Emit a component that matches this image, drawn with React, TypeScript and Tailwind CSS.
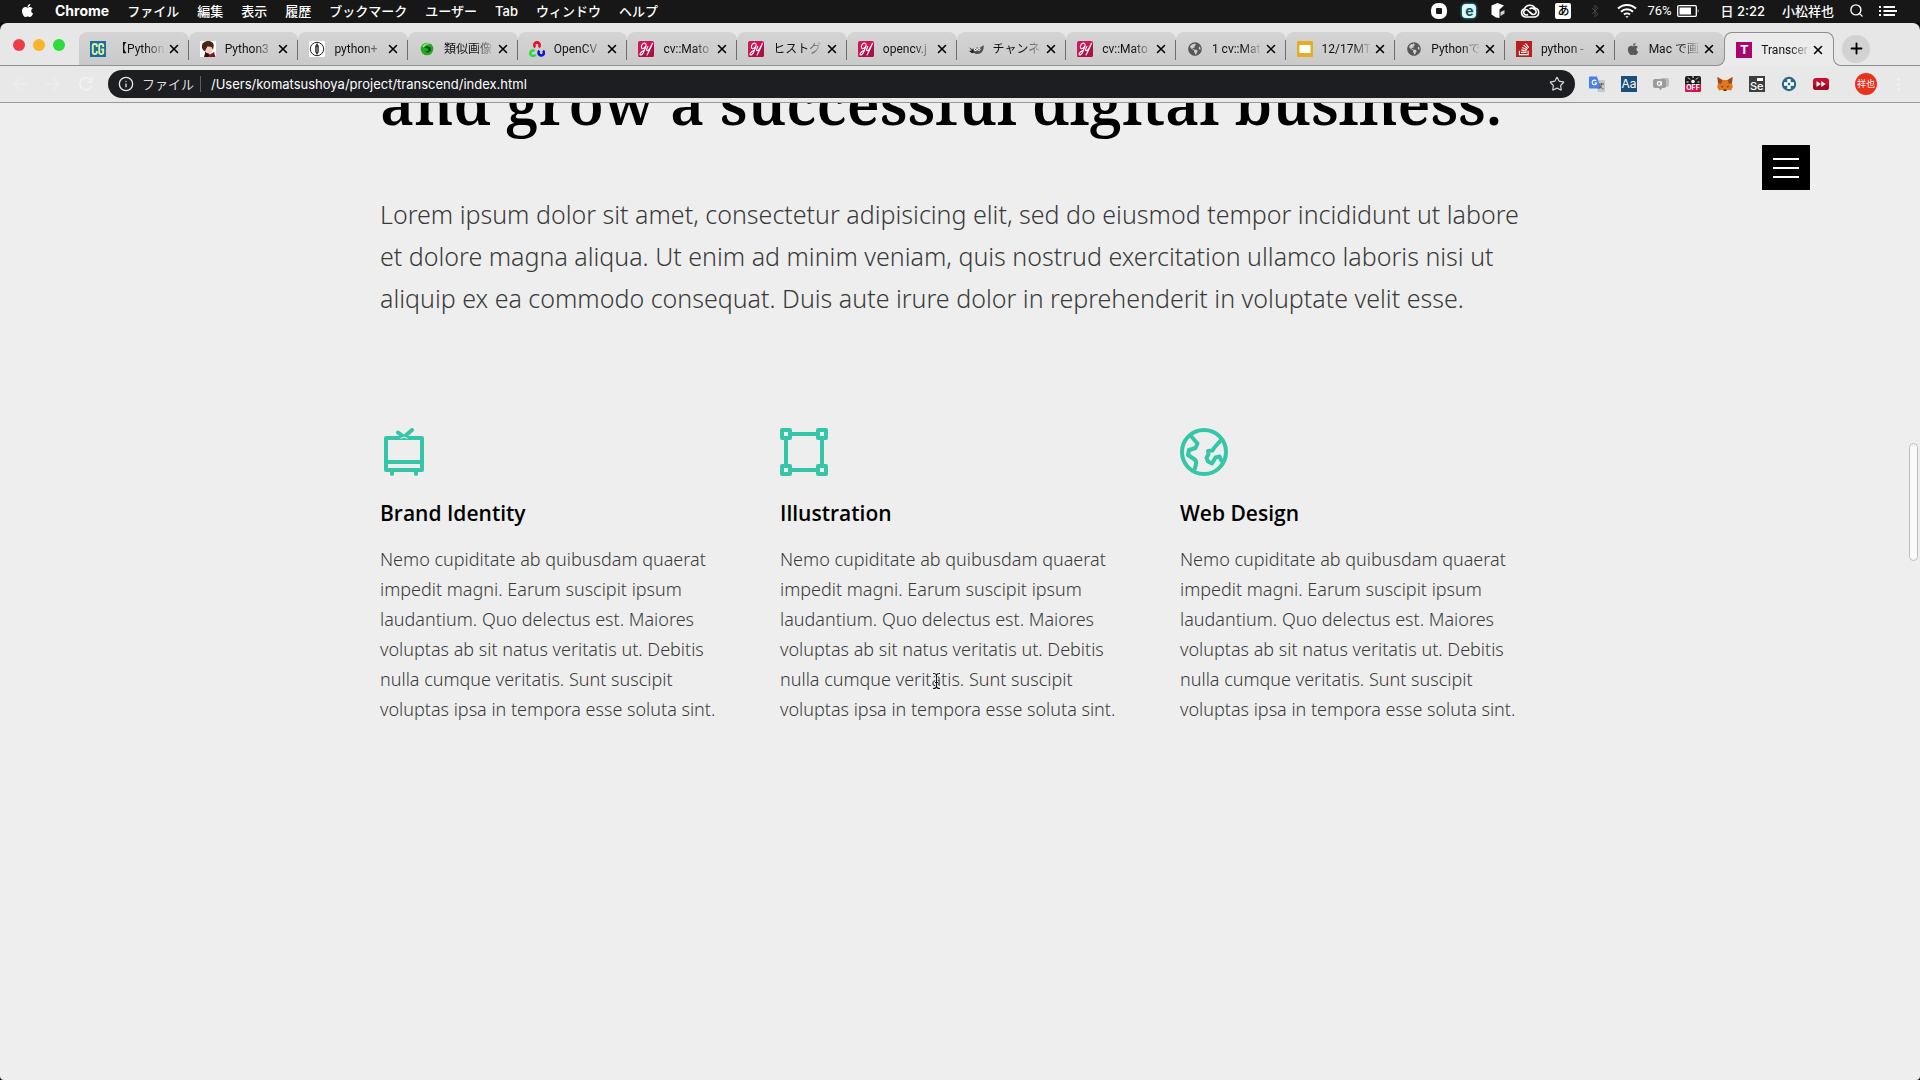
import type { ReactNode } from "react";
import { FaApple, FaGlobeAmericas, FaStackOverflow } from "react-icons/fa";
import { Bluetooth, Info, Plus, Search, Star, X } from "lucide-react";

/* ---------- favicons ---------- */

const PinkScript = () => (
  <svg viewBox="0 0 16 16" className="size-4" aria-hidden="true">
    <rect width="16" height="16" rx="2" fill="#d0145a" />
    <path d="M0 16 16 3v11a2 2 0 0 1-2 2z" fill="#ab1046" />
    <path d="M8 3.500C7.800 1.500 5 1.500 3.700 4.300c-1 2.400.3 4 2 3C7.200 6.500 8 5 8.300 4.300L5.700 11c-.8 2.200-2.600 3.500-3.500 2.800-.9-1 1-3 3.600-4.200M9.800 5.500c-1.600 2.800-1.400 4.600-.2 4.200 1.500-.6 3.400-4 5-7.700-1.600 4-3.200 8-5.600 12" fill="none" stroke="#fff" strokeWidth="1.100" strokeLinecap="round" />
  </svg>
);
const Globe = () => <FaGlobeAmericas className="mx-px size-[14px] shrink-0 text-[#55575a]" />;
const CodeGrad = () => (
  <svg viewBox="0 0 16 16" className="size-4" aria-hidden="true">
    <rect width="16" height="16" fill="#1f6b9f" />
    <path d="M6.800 6V4.500Q6.800 3 4.800 3T2.800 4.500v7q0 1.500 2 1.500t2-1.500V10M13.200 6V4.500q0-1.500-2-1.500t-2 1.500v7q0 1.500 2 1.500t2-1.500V8.500h-2" fill="none" stroke="#d9f59a" strokeWidth="1.900" />
  </svg>
);
const Boy = () => (
  <svg viewBox="0 0 16 16" className="size-4" aria-hidden="true">
    <rect width="16" height="16" fill="#fff" />
    <path d="M5 6h7v4.500L9.500 13 6 11z" fill="#f3cdb4" />
    <path d="M2 7C1 2 5 0 8 0s6 1.500 5.700 5L13 9l-1.500-3-4-.5L6 8l-1 2.500L3 9z" fill="#47251a" />
    <path d="M4 16c0-3 2-4.500 4-4l2 1.500L14 11l1.500 5z" fill="#7d1626" />
    <path d="M5 10.500 9 14l-1 2H5z" fill="#321013" />
  </svg>
);
const Needle = () => (
  <svg viewBox="0 0 16 16" className="size-4" aria-hidden="true">
    <rect width="16" height="16" rx="1" fill="#fff" />
    <circle cx="8" cy="8" r="6.700" fill="none" stroke="#222" strokeWidth="1" />
    <path d="M8 2 9.800 5v6L8 14l-1.800-3V5z" fill="#333" />
    <path d="M8 6v5" stroke="#bbb" strokeWidth=".8" />
  </svg>
);
const GreenBall = () => (
  <svg viewBox="0 0 16 16" className="size-4" aria-hidden="true">
    <circle cx="8" cy="8" r="6.300" fill="#22a822" />
    <path d="M3 5.500a6 6 0 0 1 8.500-2.500C9 3 6 4 5 6.500z" fill="#86e876" />
    <path d="M5 6.500c2.500-2.500 7-1 7 1.800 0 3.200-4.200 4-6 2.200 3 .5 4.500-1.500 3-2.700-1.200-.8-2.600-.6-4-1.300z" fill="#0a4a0d" />
  </svg>
);
const OpenCV = () => (
  <svg viewBox="0 0 16 16" className="size-4" fill="none" strokeWidth="2.600" aria-hidden="true">
    <path d="M6.300 6.200a2.700 2.700 0 1 1 3.400 0" stroke="#e8112d" />
    <path d="M5.500 10a2.700 2.700 0 1 0 .9 3.500" stroke="#22e03a" />
    <path d="M10.500 9.800a2.700 2.700 0 1 0 3.500 0" stroke="#1414c8" />
  </svg>
);
const Gimp = () => (
  <svg viewBox="0 0 16 16" className="size-4" aria-hidden="true">
    <path d="M1 6c2 2 4 2.200 5.500 1.500L9 6.500l3 .3L15.500 4c.6 3-.2 6-2.500 8-3 2-6.500 1-8-1-.8-1.200-3-2.500-4-5z" fill="#57524c" />
    <path d="m1 10 4-1 1 2.500-2 .8z" fill="#222" />
    <circle cx="7.500" cy="8.500" r="1.500" fill="#fff" />
    <circle cx="10.800" cy="8.200" r="1.600" fill="#fff" />
    <circle cx="7.700" cy="8.500" r=".6" />
    <circle cx="10.900" cy="8.200" r=".6" />
  </svg>
);
const Slides = () => (
  <svg viewBox="0 0 16 16" className="size-4" aria-hidden="true">
    <rect width="16" height="16" rx="1" fill="#e3ad25" />
    <rect x="2.500" y="4" width="11" height="8" fill="#fff" />
  </svg>
);
const Overflow = () => (
  <span className="flex size-4 shrink-0 items-center justify-center bg-[#b8201f] text-white">
    <FaStackOverflow className="size-[14px]" />
  </span>
);
const Magenta = () => (
  <span className="flex size-4 shrink-0 items-center justify-center bg-[#a8056f] text-[13px] leading-4 font-bold text-white">T</span>
);

const TABS: { title: string; icon: ReactNode }[] = [
  { title: "【Python", icon: <CodeGrad /> },
  { title: "Python3", icon: <Boy /> },
  { title: "python+", icon: <Needle /> },
  { title: "類似画像", icon: <GreenBall /> },
  { title: "OpenCV", icon: <OpenCV /> },
  { title: "cv::Mato", icon: <PinkScript /> },
  { title: "ヒストグ", icon: <PinkScript /> },
  { title: "opencv.j", icon: <PinkScript /> },
  { title: "チャンネ", icon: <Gimp /> },
  { title: "cv::Mato", icon: <PinkScript /> },
  { title: "1 cv::Mat", icon: <Globe /> },
  { title: "12/17MT", icon: <Slides /> },
  { title: "Pythonで", icon: <Globe /> },
  { title: "python -", icon: <Overflow /> },
  { title: "Mac で画", icon: <FaApple className="size-[14px] shrink-0 text-[#58595b]" /> },
];

/* ---------- menu bar ---------- */

const MENUS = ["ファイル", "編集", "表示", "履歴", "ブックマーク", "ユーザー", "Tab", "ウィンドウ", "ヘルプ"];

function MenuBar() {
  return (
    <header className="flex h-[23px] shrink-0 items-center bg-[#171717] pr-[23px] pb-[2px] pl-5 text-[13px] leading-5 text-white">
      <FaApple className="mr-5 size-[15px]" />
      <nav className="flex items-center gap-[18px] whitespace-nowrap">
        <button className="text-[14px] font-bold">Chrome</button>
        {MENUS.map((m) => (
          <button key={m} className="font-medium">{m}</button>
        ))}
      </nav>
      <div className="ml-auto flex items-center gap-[15px] whitespace-nowrap">
        <svg viewBox="0 0 16 16" className="size-4" aria-hidden="true">
          <rect width="16" height="16" rx="7" fill="#fff" />
          <rect x="5" y="5" width="6" height="6" rx="1" fill="#171717" />
        </svg>
        <span className="flex size-[14px] items-center justify-center rounded-[4px] bg-[#d9fbff] text-[14px] leading-3 font-bold text-[#10505a] shadow-[0_0_3px_#3fd0dd]">e</span>
        <svg viewBox="0 0 14 16" className="h-4 w-[14px]" aria-hidden="true">
          <path d="M6.500 0 13 2.500 8.500 6.500V15L5 14.500.5 11.500V2.500z" fill="#fff" />
          <path d="m9.500 9 4-2v3.500l-4 2.500z" fill="#d0d0d0" />
        </svg>
        <svg viewBox="0 0 20 14" className="h-[14px] w-5" fill="none" stroke="#fff" strokeWidth="1.600" aria-hidden="true">
          <path d="M5 13a4.300 4.300 0 0 1-.5-8.300A6 6 0 0 1 15 4a4.600 4.600 0 0 1 0 9z" />
          <path d="M11.800 10.300 8.500 7A2.600 2.600 0 1 0 8 10.300M9.500 5a3.800 3.800 0 0 1 5.500.7 2.600 2.600 0 0 1-3 4.300L10 8" />
        </svg>
        <span className="flex size-4 items-center justify-center rounded-[2px] bg-white text-[12px] leading-4 font-medium text-black">あ</span>
        <Bluetooth className="ml-[2px] size-[14px] text-[#4c4c4c]" strokeWidth={1.500} />
        <svg viewBox="0 0 20 15" className="h-[15px] w-5" fill="none" stroke="#fff" strokeWidth="2" aria-hidden="true">
          <path d="M1 5.500a13 13 0 0 1 18 0M4 8.700a8.700 8.700 0 0 1 12 0M7 11.600a4.400 4.400 0 0 1 6 0" />
          <path d="M8.300 13.200h3.400L10 15z" fill="#fff" stroke="none" />
        </svg>
        <span className="-ml-[5px] flex items-center gap-[5px]">
          <span className="font-['Roboto'] text-[13px]">76%</span>
          <svg viewBox="0 0 23 12" className="h-3 w-[23px]" aria-hidden="true">
            <rect x=".7" y=".7" width="18.600" height="10.600" rx="1" fill="none" stroke="#fff" strokeWidth="1.300" />
            <rect x="2.500" y="2.500" width="11.500" height="7" fill="#fff" />
            <path d="M20.800 3.800q1.500 2.200 0 4.400z" fill="#fff" />
          </svg>
        </span>
        <span className="mr-[2px] ml-[6px] font-medium">日 2:22</span>
        <span className="font-medium">小松祥也</span>
        <button aria-label="Search"><Search className="block size-[15px]" strokeWidth={2.200} /></button>
        <svg viewBox="0 0 18 12" className="h-3 w-[18px]" stroke="#fff" strokeWidth="2" aria-hidden="true">
          <path d="M0 2h2M0 6h2M0 10h2M4.500 2H16M4.500 6H18M4.500 10H16" />
        </svg>
      </div>
    </header>
  );
}

/* ---------- browser chrome ---------- */

function Title({ children }: { children: ReactNode }) {
  return (
    <span className="ml-[9px] min-w-0 flex-1 overflow-hidden whitespace-nowrap [mask-image:linear-gradient(to_right,black_60%,transparent)]">
      {children}
    </span>
  );
}

function CloseTab() {
  return (
    <button aria-label="Close tab" className="flex size-4 shrink-0 items-center justify-center text-black">
      <X className="size-[14px]" strokeWidth={2.600} />
    </button>
  );
}

function TabStrip() {
  return (
    <div className="flex h-[43px] shrink-0 items-stretch bg-[#e7e7e7] font-['Roboto','Noto_Sans_CJK_JP',sans-serif] text-[12px] leading-4 text-[#111]">
      <div className="flex w-[79px] shrink-0 items-center gap-2 border-b border-[#8f8f8f] pt-[2px] pl-[13px]">
        <span className="size-3 rounded-full bg-[#ee3b47]" />
        <span className="size-3 rounded-full bg-[#f9b32d]" />
        <span className="size-3 rounded-full bg-[#2cdc3d]" />
      </div>
      <div className="grid min-w-0 flex-1 grid-cols-[repeat(16,minmax(0,1fr))]">
        {TABS.map((t, i) => (
          <div key={i} className="flex border-b border-[#8f8f8f] pt-[9px]">
            <div className="flex min-w-0 flex-1 items-center rounded-t-[8px] bg-linear-to-b from-[#d4d4d4] to-[#cacaca] pt-px pr-[7px] pl-[11px]">
              {t.icon}
              <Title>{t.title}</Title>
              <CloseTab />
            </div>
            {i < TABS.length - 1 && <span className="mt-2 -ml-px h-5 w-px shrink-0 bg-[#6d6d6d]" />}
          </div>
        ))}
        <div className="relative mt-[9px] flex items-center rounded-t-[8px] border border-b-0 border-[#8f8f8f] bg-[#ebebeb] pr-[7px] pl-[11px]">
          <span className="absolute right-full bottom-0 size-2 bg-[#ebebeb]">
            <span className="block size-full rounded-br-[8px] border-r border-b border-[#8f8f8f] bg-[#cacaca]" />
          </span>
          <Magenta />
          <Title>Transcer</Title>
          <CloseTab />
          <span className="absolute bottom-0 left-full size-2 bg-[#ebebeb]">
            <span className="block size-full rounded-bl-[8px] border-b border-l border-[#8f8f8f] bg-[#e7e7e7]" />
          </span>
        </div>
      </div>
      <div className="flex w-[86px] shrink-0 items-center border-b border-[#8f8f8f] pt-[9px] pl-2">
        <button aria-label="New tab" className="flex size-7 items-center justify-center rounded-full bg-[#d2d2d2] text-black">
          <Plus className="size-[17px]" strokeWidth={2.600} />
        </button>
      </div>
    </div>
  );
}

function Extensions() {
  return (
    <div className="flex items-center gap-4">
      <svg viewBox="0 0 16 16" className="size-4" aria-hidden="true">
        <path d="M6 4h9a1 1 0 0 1 1 1v10a1 1 0 0 1-1 1H9z" fill="#c8c8c8" />
        <path d="M1 .5h7l4 12H1a1 1 0 0 1-1-1v-10a1 1 0 0 1 1-1z" fill="#4a7fe8" />
        <path d="M7.300 5a2.300 2.300 0 1 0 .4 2H5.600" fill="none" stroke="#fff" strokeWidth="1.100" />
        <path d="M10 8h5M12.500 7v1c0 2-1.500 4-3 4.500M11 9.500c1 2 2 3 3.500 3.500" fill="none" stroke="#555" />
      </svg>
      <span className="flex size-4 items-center justify-center bg-[#1d4f7c] text-[12px] leading-4 text-white">Aa</span>
      <svg viewBox="0 0 16 16" className="size-4" aria-hidden="true">
        <path d="M8 2h6a2 2 0 0 1 2 2v5a2 2 0 0 1-2 2h-1z" fill="#bdbdbd" />
        <path d="M2 3h9a2 2 0 0 1 2 2v5a2 2 0 0 1-2 2H9l-1.500 2.500L6 12H2a2 2 0 0 1-2-2V5a2 2 0 0 1 2-2z" fill="#9b9b9b" />
        <circle cx="6.200" cy="7.500" r="1.800" fill="none" stroke="#fff" strokeWidth="1.200" />
        <path d="M8.300 5.500v4" stroke="#fff" strokeWidth="1.100" />
      </svg>
      <span className="flex size-4 flex-col overflow-hidden rounded-[2px] bg-[#1c1c1c]">
        <svg viewBox="0 0 16 8" className="h-2 w-4" stroke="#fff" aria-hidden="true">
          <path d="M8 0v2M3 1.500 5 3.500M13 1.500 11 3.500M1.500 6h2M12.500 6h2" />
          <circle cx="8" cy="5.500" r="1.800" fill="#fff" stroke="none" />
        </svg>
        <span className="flex h-2 items-center justify-center bg-[#d3134f] text-[7px] leading-2 font-bold text-white">OFF</span>
      </span>
      <svg viewBox="0 0 16 16" className="size-4" aria-hidden="true">
        <path d="m.5 1 5.500 3h4l5.500-3-.5 6 .8 4-1.800 3.500-3.500-.8L9.500 15h-3l-1-1.300-3.500.8L.2 11 1 7z" fill="#e2761b" />
        <path d="m.5 1 5 3.500L4 8 1 7zM15.500 1l-5 3.500L12 8l3-1z" fill="#9a4a20" />
        <path d="M4 9.500 6.500 11 5 11.500zM12 9.500 9.500 11l1.500.5z" fill="#233447" />
        <path d="M6.500 13.500h3l-.5 1.500H7z" fill="#3a2a22" />
      </svg>
      <span className="relative flex size-4 items-end bg-[#3c3f40] pl-px text-[11px] leading-3 font-medium text-white">
        Se
        <span className="absolute top-[2px] right-[2px] h-[3px] w-[6px] bg-white" />
      </span>
      <svg viewBox="0 0 16 16" className="size-4" aria-hidden="true">
        <circle cx="8" cy="8" r="7.200" fill="#27688b" />
        <path d="M6.300 3h3.400v3.300H13v3.400H9.700V13H6.300V9.700H3V6.300h3.300z" fill="#fff" />
        <rect x="6.800" y="6.800" width="2.400" height="2.400" fill="#27688b" />
      </svg>
      <svg viewBox="0 0 16 16" className="size-4" aria-hidden="true">
        <rect y="2" width="16" height="12" rx="3" fill="#c8102e" />
        <path d="M0 9h16v2a3 3 0 0 1-3 3H3a3 3 0 0 1-3-3z" fill="#9d0c22" />
        <path d="m3.500 5 4.300 3-4.300 3zM8.300 5l4.300 3-4.300 3z" fill="#fff" />
      </svg>
    </div>
  );
}

function Toolbar() {
  return (
    <div className="flex h-[37px] shrink-0 items-center border-b border-[#9a9a9a] bg-[#e8e8e8]">
      <div className="flex w-[108px] shrink-0 items-center gap-[17px] pl-3 text-[#ececec]">
        <button aria-label="Back">
          <svg viewBox="0 0 16 16" className="size-4" fill="none" stroke="currentColor" strokeWidth="2"><path d="M15 8H2M8 2 2 8l6 6" /></svg>
        </button>
        <button aria-label="Forward">
          <svg viewBox="0 0 16 16" className="size-4" fill="none" stroke="currentColor" strokeWidth="2"><path d="M1 8h13M8 2l6 6-6 6" /></svg>
        </button>
        <button aria-label="Reload" className="text-[#f0f0f0]">
          <svg viewBox="0 0 16 16" className="size-4" fill="none" stroke="currentColor" strokeWidth="2"><path d="M13.500 10A6 6 0 1 1 12.500 4M14 1v5H9" /></svg>
        </button>
      </div>
      <div className="flex h-7 min-w-0 flex-1 items-center rounded-full bg-[#1d1e21] px-[10px] text-[13px] leading-5 text-white">
        <Info className="size-4 shrink-0 text-[#e6e6e6]" strokeWidth={2} />
        <label htmlFor="address" className="ml-2 shrink-0 border-r border-[#5f6063] pr-[6px] leading-4 text-[#dedede]">ファイル</label>
        <input
          id="address"
          className="ml-[10px] min-w-0 flex-1 bg-transparent outline-none"
          defaultValue="/Users/komatsushoya/project/transcend/index.html"
        />
        <button aria-label="Bookmark"><Star className="block size-4 text-[#d5d5d5]" strokeWidth={1.800} /></button>
      </div>
      <div className="flex w-[345px] shrink-0 items-center pl-[14px]">
        <Extensions />
        <button aria-label="Profile" className="ml-[26px] flex size-[22px] items-center justify-center rounded-full bg-[#e8331c] text-[9px] leading-4 text-white">
          祥也
        </button>
        <span className="ml-5 flex flex-col gap-[2px]" aria-hidden="true">
          <span className="size-[3px] rounded-full bg-[#f1f1f1]" />
          <span className="size-[3px] rounded-full bg-[#f1f1f1]" />
          <span className="size-[3px] rounded-full bg-[#f1f1f1]" />
        </span>
      </div>
    </div>
  );
}

/* ---------- page ---------- */

const TvIcon = () => (
  <svg viewBox="0 0 48 48" className="size-12" fill="none" stroke="currentColor" strokeWidth="4" strokeLinejoin="round" aria-hidden="true">
    <rect x="6" y="10" width="36" height="32" />
    <path d="M6 34h36" />
    <path d="M12 42v4M36 42v4" strokeLinecap="round" />
    <path d="m18 4.500 6 4.500 8-7" strokeLinecap="round" />
    <path d="m20.500 10.500 3.500-1.500 3.500 1.500" stroke="#eeeeee" strokeWidth="1" />
  </svg>
);
const FrameIcon = () => (
  <svg viewBox="0 0 48 48" className="size-12" fill="none" stroke="currentColor" strokeWidth="4" strokeLinejoin="round" aria-hidden="true">
    <path d="M2 2h8v8H2zM38 2h8v8h-8zM2 38h8v8H2zM38 38h8v8h-8z" />
    <path d="M12 6h24M12 42h24M6 12v24M42 12v24" />
  </svg>
);
const EarthIcon = () => (
  <svg viewBox="0 0 48 48" className="size-12" fill="none" stroke="currentColor" strokeWidth="4" strokeLinejoin="round" aria-hidden="true">
    <circle cx="24" cy="24" r="22" />
    <path d="m11 8 6.500 7.500L15.500 20 9 22l-1 5 6 4q3 2 2 5l-1.500 6" />
    <path d="M41 12 34 20l-1.500 2.500-4.500.5.500 3-2 4 1.500 3.500L32 35.500l3.500-6 4-1L42 34" />
  </svg>
);

const SERVICES = [
  { title: "Brand Identity", icon: <TvIcon /> },
  { title: "Illustration", icon: <FrameIcon /> },
  { title: "Web Design", icon: <EarthIcon /> },
];

function Service({ title, icon }: { title: string; icon: ReactNode }) {
  return (
    <article className="px-5 text-[#35c6a8]">
      {icon}
      <h2 className="mt-[21px] font-['Open_Sans',sans-serif] text-[21px] leading-8 font-semibold text-black">{title}</h2>
      <p className="mt-[15px] font-['Noto_Sans',sans-serif] text-[18px] leading-[30px] font-light whitespace-nowrap text-[#3a3a3a]">
        Nemo cupiditate ab quibusdam quaerat<br />
        impedit magni. Earum suscipit ipsum<br />
        laudantium. Quo delectus est. Maiores<br />
        voluptas ab sit natus veritatis ut. Debitis<br />
        nulla cumque veritatis. Sunt suscipit<br />
        voluptas ipsa in tempora esse soluta sint.
      </p>
    </article>
  );
}

function Page() {
  return (
    <main className="relative flex-1 overflow-hidden bg-[#eeeeee]">
      <section className="mx-auto max-w-[1200px]">
        <div className="px-5">
          <h1 className="-mt-[37px] font-['Noto_Serif','Liberation_Serif',serif] text-[59px] leading-[72px] font-semibold whitespace-nowrap text-black">
            and grow a successful digital business.
          </h1>
          <p className="mt-[55px] font-['Noto_Sans',sans-serif] text-[25px] leading-[42px] font-light whitespace-nowrap text-[#3a3a3a]">
            Lorem ipsum dolor sit amet, consectetur adipisicing elit, sed do eiusmod tempor incididunt ut labore<br />
            et dolore magna aliqua. Ut enim ad minim veniam, quis nostrud exercitation ullamco laboris nisi ut<br />
            aliquip ex ea commodo consequat. Duis aute irure dolor in reprehenderit in voluptate velit esse.
          </p>
        </div>
        <div className="mt-[109px] grid grid-cols-3">
          {SERVICES.map((s) => (
            <Service key={s.title} {...s} />
          ))}
        </div>
      </section>
      <button aria-label="Menu" className="absolute top-[42px] right-[110px] flex h-[45px] w-12 flex-col items-center justify-center gap-[7px] bg-black">
        <span className="h-[2px] w-[26px] bg-white" />
        <span className="h-[2px] w-[26px] bg-white" />
        <span className="h-[2px] w-[26px] bg-white" />
      </button>
      <span className="absolute top-[340px] right-[2px] h-[118px] w-[9px] rounded-full border border-[#bdbdbd] bg-[#fafafa]" />
      <svg viewBox="0 0 9 18" className="absolute top-[569px] left-[932px] h-[18px] w-[9px]" fill="none" aria-hidden="true">
        <path d="M1 1.500q3.500 0 3.500 2v11q0 2-3.500 2M8 1.500q-3.500 0-3.500 2v11q0 2 3.500 2M3 10.500h3" stroke="#fff" strokeWidth="2.400" />
        <path d="M1 1.500q3.500 0 3.500 2v11q0 2-3.500 2M8 1.500q-3.500 0-3.500 2v11q0 2 3.500 2M3 10.500h3" stroke="#111" strokeWidth="1.100" />
      </svg>
    </main>
  );
}

export default function App() {
  return (
    <div className="flex h-screen flex-col bg-black font-['Inter','Noto_Sans_CJK_JP',sans-serif]">
      <MenuBar />
      <div className="flex min-h-0 flex-1 flex-col overflow-hidden rounded-t-[7px] rounded-b-[4px]">
        <TabStrip />
        <Toolbar />
        <Page />
      </div>
    </div>
  );
}
